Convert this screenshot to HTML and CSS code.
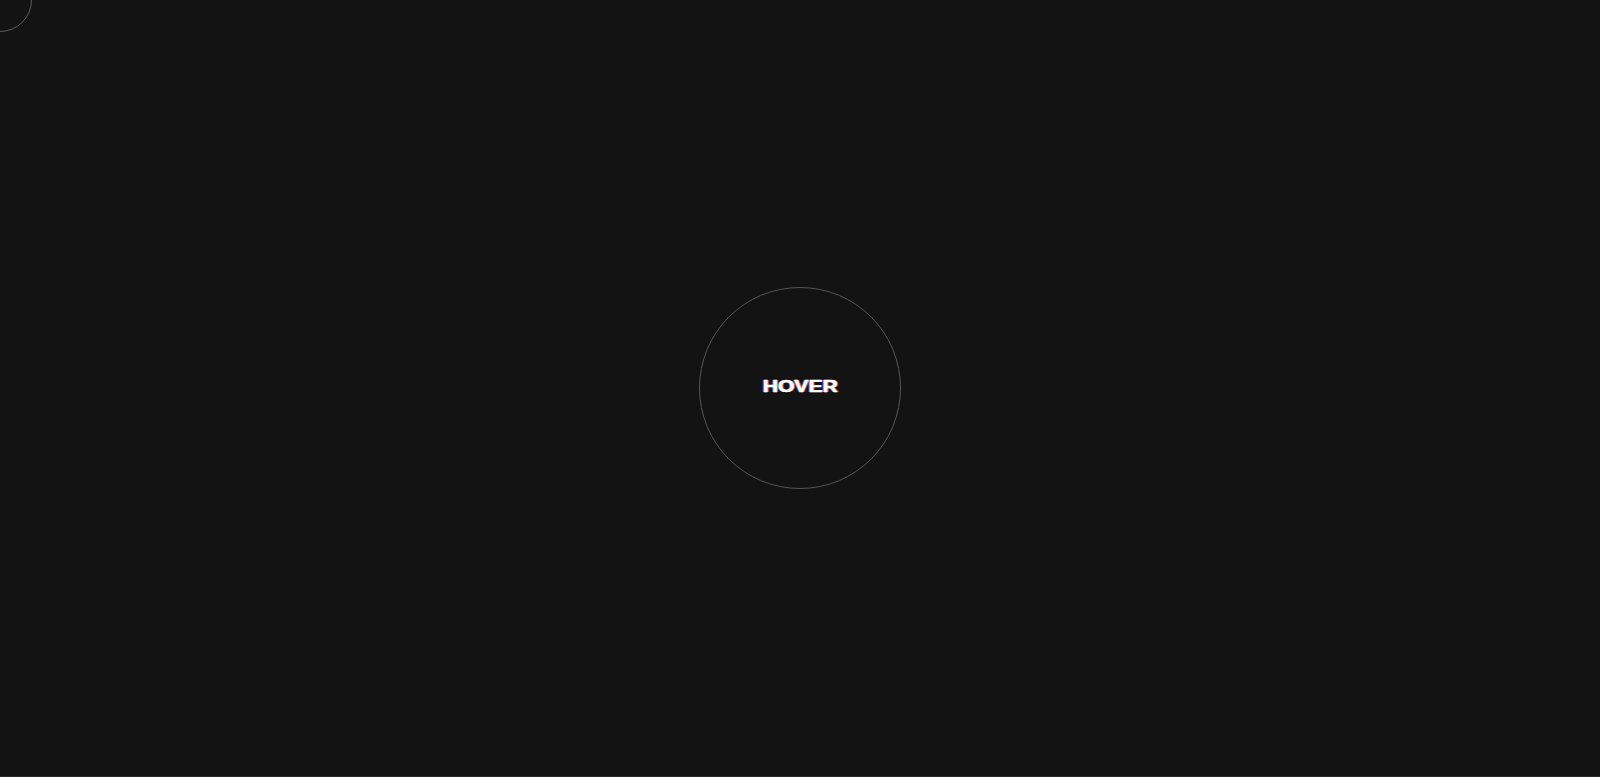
FILE: index.html
```html
<!DOCTYPE html>
<html lang="en">
<head>
<meta charset="utf-8">
<title>Hover</title>
<link rel="stylesheet" href="styles.css">
</head>
<body>
<div class="cursor"></div>
<main class="stage">
  <div class="ring">
    <span class="label">HOVER</span>
  </div>
</main>
<div class="baseline"></div>
</body>
</html>
```
FILE: styles.css
```css
html, body {
  margin: 0;
  padding: 0;
  height: 100%;
  background: #131313;
  overflow: hidden;
}
body {
  display: flex;
  flex-direction: column;
  font-family: "Liberation Sans", Arial, sans-serif;
}
.stage {
  flex: 1;
  display: flex;
  align-items: center;
  justify-content: center;
}
.ring {
  width: 200px;
  height: 200px;
  border: 1px solid #555555;
  border-radius: 50%;
  display: flex;
  align-items: center;
  justify-content: center;
}
.label {
  color: #ffffff;
  font-weight: 700;
  font-size: 17px;
  line-height: 1;
  transform: scaleX(1.24);
  -webkit-text-stroke: 0.5px #ffffff;
  text-shadow: -1px 0 0 #2f6bff, 1px 0 0 #ff5a1f;
  margin-top: -4px;
}
.cursor {
  position: absolute;
  left: -32px;
  top: -32px;
  width: 64px;
  height: 64px;
  border: 1px solid #5a5a5a;
  border-radius: 50%;
  box-sizing: border-box;
}
.baseline {
  height: 1px;
  background: #2b2b2b;
}
```
